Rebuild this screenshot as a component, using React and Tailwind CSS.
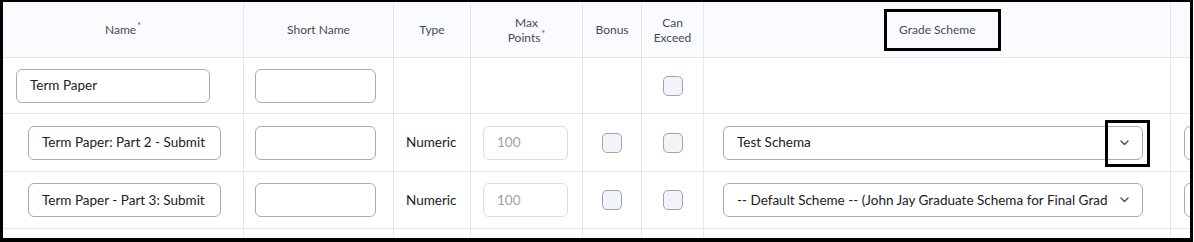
import React from 'react';

const line = 'border-[#e3e8ef]';

const Cell = ({ className = '', last, bottom = true, children }) => (
  <div
    className={`flex items-center ${last ? '' : 'border-r'} ${bottom ? 'border-b' : ''} ${line} ${className}`}
  >
    {children}
  </div>
);

const TextBox = ({ value, className = '' }) => (
  <div
    className={`h-[34px] rounded-[6px] border border-[#a9acaf] bg-white flex items-center px-[13px] text-[13.5px] text-[#202122] ${className}`}
  >
    {value}
  </div>
);

const Check = () => (
  <div className="w-[20px] h-[20px] rounded-[5px] border-[1.5px] border-[#a0a4a8] bg-[#f1f4f9]" />
);

const Chevron = () => (
  <svg width="9" height="6" viewBox="0 0 9 6" fill="none" className="shrink-0">
    <path d="M1 1l3.5 3.5L8 1" stroke="#565a5c" strokeWidth="1.5" strokeLinecap="round" strokeLinejoin="round" />
  </svg>
);

const Select = ({ value, marked }) => (
  <div className="relative ml-[19px] w-[420px] h-[34px] rounded-[6px] border border-[#a9acaf] bg-white flex items-center pl-[13px] pr-[13px]">
    <span className="flex-1 min-w-0 mr-[13px] overflow-hidden whitespace-nowrap text-[13.5px] text-[#202122]">{value}</span>
    <Chevron />
    {marked && (
      <div className="absolute left-[381px] top-[-7px] w-[45px] h-[47px] border-[3px] border-black" />
    )}
  </div>
);

const Req = () => <sup className="text-[#cd2026] text-[9px] ml-[1px]">*</sup>;

const rows = [
  { name: 'Term Paper', child: false },
  { name: 'Term Paper: Part 2 - Submit', child: true, scheme: 'Test Schema', marked: true },
  { name: 'Term Paper - Part 3: Submit', child: true, scheme: '-- Default Scheme -- (John Jay Graduate Schema for Final Grade)' },
];

const heights = ['h-[56px]', 'h-[58px]', 'h-[57px]'];

export default function App() {
  return (
    <div
      className="w-[1193px] h-[242px] bg-white border-t-2 border-l-[3px] border-r-[3px] border-b-4 border-black overflow-hidden"
      style={{ fontFamily: 'Lato, "Open Sans", sans-serif' }}
    >
      <div className="grid grid-cols-[241px_150px_77px_112px_59px_62px_467px_1fr] grid-rows-[56px_56px_58px_57px_1fr] h-full">
        {/* header */}
        <Cell className="justify-center bg-[#f9fbff] text-[12px] text-[#494c4e]">
          <span>Name<Req /></span>
        </Cell>
        <Cell className="justify-center bg-[#f9fbff] text-[12px] text-[#494c4e]">Short Name</Cell>
        <Cell className="justify-center bg-[#f9fbff] text-[12px] text-[#494c4e]">Type</Cell>
        <Cell className="justify-center bg-[#f9fbff] text-[12px] text-[#494c4e] text-center leading-[15px]">
          <span>Max<br />Points<Req /></span>
        </Cell>
        <Cell className="justify-center bg-[#f9fbff] text-[12px] text-[#494c4e]">Bonus</Cell>
        <Cell className="justify-center bg-[#f9fbff] text-[12px] text-[#494c4e] text-center leading-[15px]">
          <span>Can<br />Exceed</span>
        </Cell>
        <Cell className="bg-[#f9fbff] text-[12px] text-[#494c4e] pl-[180px]">
          <div className="w-[117px] h-[42px] border-[3px] border-black flex items-center pl-[12px]">
            Grade Scheme
          </div>
        </Cell>
        <Cell last className="bg-[#f9fbff]" />

        {rows.map((r, i) => (
          <React.Fragment key={r.name}>
            <Cell className={`${heights[i]} ${r.child ? 'pl-[25px]' : 'pl-[13px]'}`}>
              <TextBox value={r.name} className={r.child ? 'w-[193px]' : 'w-[194px]'} />
            </Cell>
            <Cell className="pl-[11px]">
              <TextBox value="" className="w-[121px]" />
            </Cell>
            <Cell className="pl-[12px] text-[13.5px] text-[#202122]">{r.child ? 'Numeric' : ''}</Cell>
            <Cell className="pl-[12px]">
              {r.child && (
                <div className="w-[85px] h-[34px] rounded-[6px] border border-[#dadde1] flex items-center px-[13px] text-[13.5px] text-[#9ea2a6]">
                  100
                </div>
              )}
            </Cell>
            <Cell className="justify-center">{r.child && <Check />}</Cell>
            <Cell className="justify-center">
              <Check />
            </Cell>
            <Cell>{r.child && <Select value={r.scheme} marked={r.marked} />}</Cell>
            <Cell last className="pl-[13px] overflow-hidden">
              {r.child && <div className="shrink-0 w-[40px] h-[34px] rounded-[6px] border border-[#a9acaf]" />}
            </Cell>
          </React.Fragment>
        ))}

        {[0, 1, 2, 3, 4, 5, 6, 7].map((c) => (
          <Cell key={c} last={c === 7} bottom={false} />
        ))}
      </div>
    </div>
  );
}
